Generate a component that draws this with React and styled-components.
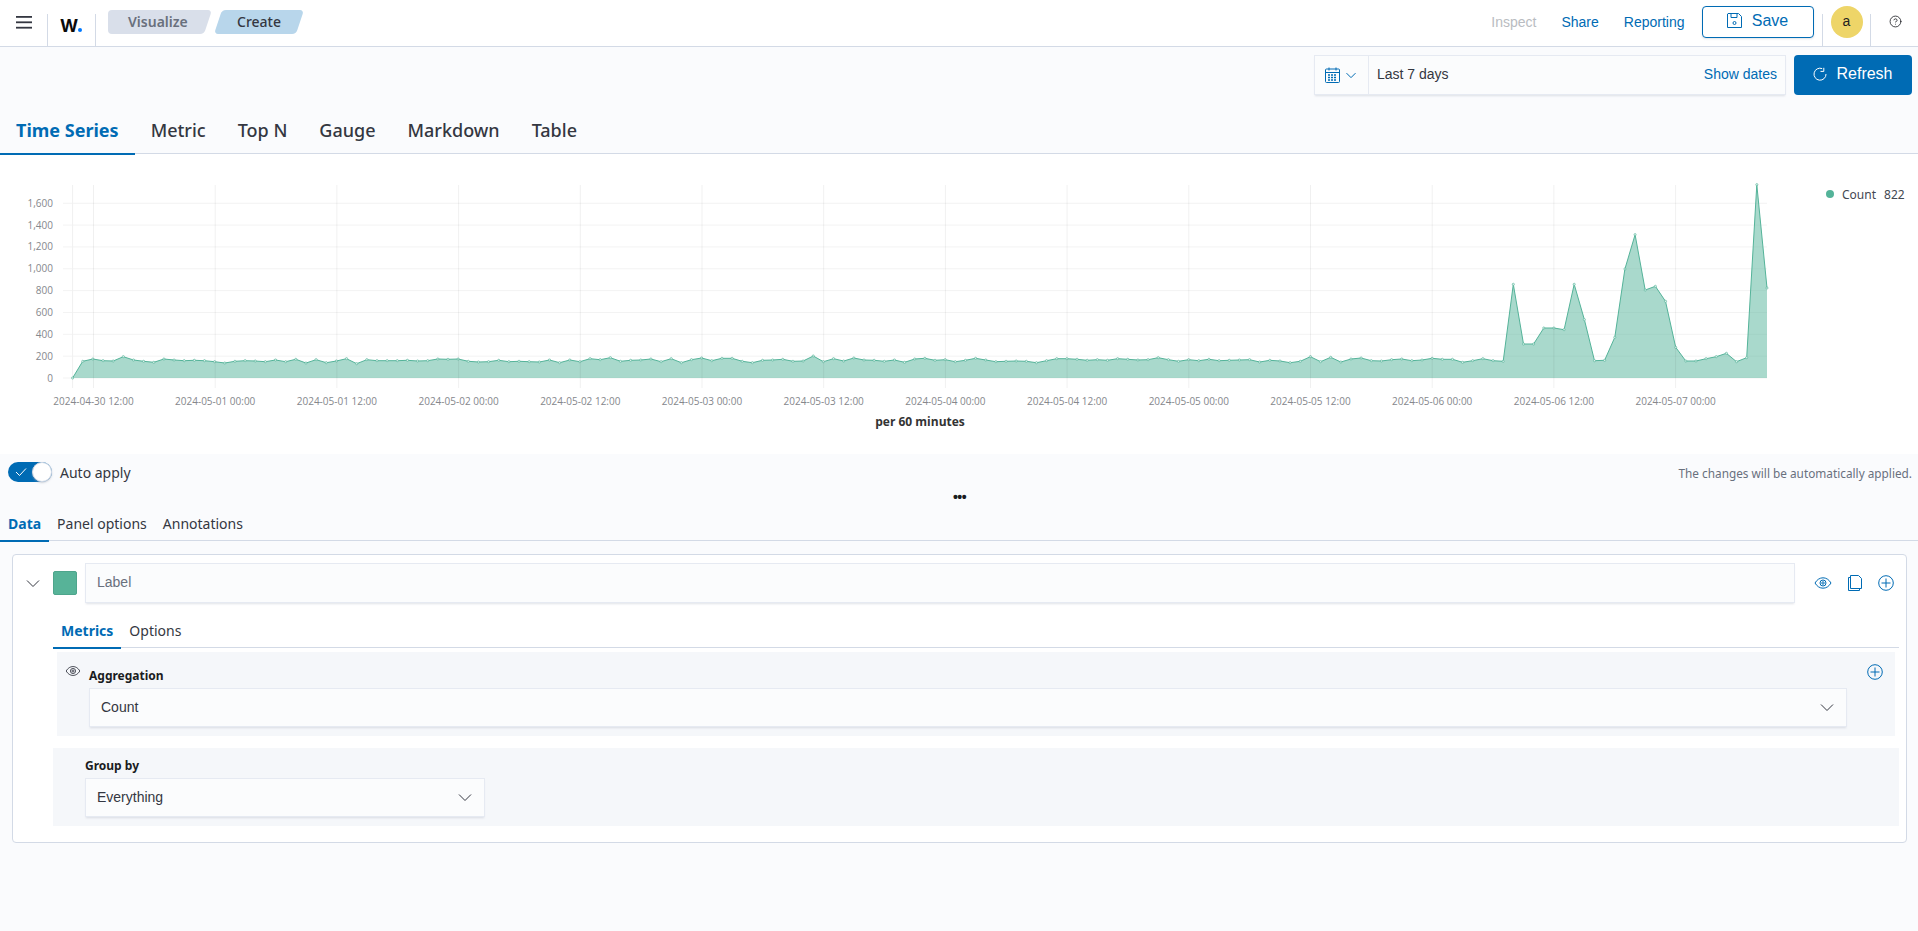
import React from "react";
import styled, { createGlobalStyle } from "styled-components";
import { CircleHelp } from "lucide-react";

const GlobalStyle = createGlobalStyle`
  html, body { margin: 0; padding: 0; background: #fafbfd; }
  body { font-family: "Noto Sans", sans-serif; color: #343741; }
  * { box-sizing: border-box; }
  svg { display: block; }
`;

const arial = `"Liberation Sans", Arial, sans-serif`;
const blue = "#006bb4";

const Page = styled.div`
  width: 1918px;
  min-height: 931px;
  overflow: hidden;
`;

/* top bar */
const Header = styled.header`
  display: flex;
  height: 47px;
  background: #fff;
  border-bottom: 1px solid #d3dae6;
`;
const MenuCell = styled.div`
  width: 48px;
  height: 32px;
  align-self: flex-end;
  border-right: 1px solid #d3dae6;
  padding: 2px 0 0 16px;
`;
const LogoCell = styled.div`
  width: 48px;
  height: 32px;
  align-self: flex-end;
  border-right: 1px solid #d3dae6;
  padding-left: 12px;
  display: flex;
  align-items: baseline;
  font-family: Inter, sans-serif;
  font-size: 17.5px;
  line-height: 24px;
  font-weight: 700;
  color: #0b0b0b;
`;
const LogoDot = styled.span`
  width: 4px;
  height: 4px;
  border-radius: 50%;
  background: #0079ff;
`;
const Crumbs = styled.div`
  display: flex;
  margin: 10px 0 0 12px;
  gap: 10px;
`;
const Crumb = styled.div`
  position: relative;
  height: 24px;
  width: ${(p) => p.$w}px;
  padding-left: ${(p) => p.$pad}px;
  font-size: 14px;
  line-height: 24px;
  font-weight: ${(p) => (p.$current ? 500 : 600)};
  color: ${(p) => (p.$current ? "#343741" : "#69707d")};
  z-index: 0;

  &::before {
    content: "";
    position: absolute;
    top: 0;
    bottom: 0;
    right: 0;
    left: ${(p) => (p.$current ? 0 : "12px")};
    z-index: -1;
    border-radius: 4px;
    background: ${(p) => (p.$current ? "#b8d6eb" : "#d9dfea")};
    transform: skewX(-18.4deg);
  }
  ${(p) =>
    !p.$current &&
    `&::after {
      content: "";
      position: absolute;
      left: 0; top: 0; bottom: 0;
      width: 24px;
      z-index: -1;
      border-radius: 4px 0 0 4px;
      background: #d9dfea;
    }`}
`;
const Nav = styled.nav`
  margin-left: auto;
  display: flex;
  align-items: flex-start;
  font-family: ${arial};
`;
const NavLink = styled.a`
  font-size: 14px;
  line-height: 16px;
  margin: 14px ${(p) => p.$gap ?? 26}px 0 0;
  color: ${(p) => (p.$muted ? "#b9bcc1" : blue)};
`;
const SaveButton = styled.button`
  width: 112px;
  height: 32px;
  margin-top: 6px;
  background: #fff;
  border: 1px solid ${blue};
  border-radius: 4px;
  color: ${blue};
  font: 16px/20px ${arial};
  display: flex;
  align-items: center;
  justify-content: center;
  gap: 10px;
  padding: 0 0 3px;
  box-shadow: 0 1px 2px rgba(152, 162, 179, 0.3);
`;
const AvatarCell = styled.div`
  width: 49px;
  height: 32px;
  align-self: flex-end;
  margin-left: 8.5px;
  border-left: 1px solid #d3dae6;
  border-right: 1px solid #d3dae6;
  display: flex;
  justify-content: center;
`;
const Avatar = styled.div`
  width: 32px;
  height: 32px;
  margin-top: -8px;
  border-radius: 50%;
  background: #eed568;
  color: #222;
  font-size: 14px;
  line-height: 30px;
  text-align: center;
`;
const HelpCell = styled.div`
  width: 47px;
  padding: 15px 0 0 18px;
  color: #1a1c21;
`;

/* time picker row */
const Toolbar = styled.div`
  display: flex;
  justify-content: flex-end;
  gap: 8px;
  height: 59px;
  padding: 8px 6px 0 0;
`;
const DateBar = styled.div`
  width: 472px;
  height: 40px;
  display: flex;
  align-items: center;
  background: #fbfcfd;
  border: 1px solid #e6eaf2;
  box-shadow: 0 2px 2px -1px rgba(152, 162, 179, 0.3);
  font: 14px ${arial};
`;
const DateQuick = styled.div`
  width: 54px;
  height: 100%;
  display: flex;
  align-items: center;
  gap: 5px;
  padding-left: 10px;
  border-right: 1px solid #e6eaf2;
`;
const DateText = styled.span`
  flex: 1;
  padding: 0 0 2px 8px;
  color: #343741;
`;
const ShowDates = styled.a`
  color: ${blue};
  padding: 0 8px 2px 0;
`;
const RefreshButton = styled.button`
  width: 118px;
  height: 40px;
  border: 0;
  border-radius: 4px;
  background: ${blue};
  color: #fff;
  font: 16px ${arial};
  display: flex;
  align-items: center;
  justify-content: center;
  gap: 9px;
  padding: 0 0 2px;
`;

/* tabs */
const TabRow = styled.div`
  display: flex;
  height: ${(p) => p.$h}px;
  margin-top: ${(p) => p.$top ?? 0}px;
  margin-left: ${(p) => p.$inset ?? 0}px;
  margin-right: ${(p) => p.$insetRight ?? 0}px;
  border-bottom: 1px solid #d3dae6;
`;
const Tab = styled.div`
  padding: 0 ${(p) => p.$pad}px;
  height: ${(p) => p.$h + 1}px;
  line-height: ${(p) => p.$h}px;
  font-size: ${(p) => p.$size}px;
  font-weight: ${(p) => (p.$active ? 700 : p.$size > 14 ? 500 : 400)};
  color: ${(p) => (p.$active ? blue : "#343741")};
  border-bottom: 2px solid ${(p) => (p.$active ? blue : "transparent")};
`;

/* chart */
const ChartSection = styled.section`
  display: flex;
  height: 300px;
  background: #fff;
`;
const ChartSvg = styled.svg`
  flex: none;
`;
const AxisText = styled.text`
  font-family: "Open Sans", sans-serif;
  font-size: 10px;
  fill: #85878c;
`;
const AxisTitle = styled.text`
  font-family: "Open Sans", sans-serif;
  font-size: 12px;
  font-weight: 700;
  fill: #333;
`;
const Legend = styled.div`
  display: flex;
  align-items: center;
  height: 16px;
  margin: 32px 0 0 26px;
  font-size: 12px;
  color: #434852;
`;
const LegendDot = styled.span`
  width: 8px;
  height: 8px;
  border-radius: 50%;
  background: #54b399;
  margin-right: 8px;
`;
const LegendValue = styled.span`
  margin-left: 8px;
`;

/* auto apply row */
const ApplyRow = styled.div`
  display: flex;
  align-items: center;
  height: 28px;
  padding: 8px 6px 0 8px;
`;
const Switch = styled.div`
  width: 44px;
  height: 20px;
  border-radius: 10px;
  background: ${blue};
  display: flex;
  align-items: center;
  justify-content: space-between;
  padding-left: 7px;
`;
const SwitchKnob = styled.span`
  width: 20px;
  height: 20px;
  border-radius: 50%;
  background: #fff;
  border: 1px solid #d3dae6;
  box-shadow: 0 1px 2px rgba(152, 162, 179, 0.5);
`;
const ApplyLabel = styled.span`
  margin: 1px 0 0 8px;
  font-size: 14px;
  color: #343741;
`;
const ApplyHint = styled.span`
  margin: 1px 0 0 auto;
  font-size: 11.8px;
  color: #69707d;
`;
const Dots = styled.div`
  height: 20px;
  margin-top: 4px;
  padding-left: 1px;
  text-align: center;
  font: 700 14px/23px ${arial};
  letter-spacing: -0.5px;
  color: #1a1c21;
`;

/* series card */
const Card = styled.div`
  width: 1895px;
  margin: 13px 0 0 12px;
  padding: 8px 0 16px;
  background: #fff;
  border: 1px solid #d3dae6;
  border-radius: 4px;
`;
const SeriesRow = styled.div`
  display: flex;
  align-items: center;
  height: 40px;
`;
const Collapse = styled.div`
  width: 40px;
  display: flex;
  justify-content: center;
  color: #343741;
`;
const Swatch = styled.div`
  width: 24px;
  height: 24px;
  margin-right: 8px;
  border-radius: 2px;
  border: 1px solid #4ea58c;
  background: #57b398;
`;
const Field = styled.div`
  width: ${(p) => p.$w}px;
  height: ${(p) => p.$h ?? 39}px;
  display: flex;
  align-items: center;
  justify-content: space-between;
  padding: 0 11px 2px;
  background: #fbfcfd;
  border: 1px solid #e6eaf2;
  box-shadow: 0 2px 2px -1px rgba(152, 162, 179, 0.3);
  font: 14px ${arial};
  color: ${(p) => (p.$placeholder ? "#69707d" : "#343741")};
`;
const RowActions = styled.div`
  display: flex;
  align-items: center;
  gap: 16px;
  margin-left: 19px;
  color: ${blue};
`;
const MetricPanel = styled.div`
  display: flex;
  height: 84px;
  margin: 4px 11px 0 44px;
  padding-top: 15px;
  background: #f5f7fa;
`;
const EyeCol = styled.div`
  width: 32px;
  margin-top: -2px;
  padding-left: 8px;
  color: #343741;
`;
const FieldCol = styled.div`
  width: 1758px;
`;
const PlusCol = styled.div`
  margin-top: -3px;
  padding-left: 20px;
  color: ${blue};
`;
const FieldLabel = styled.div`
  font-size: 12px;
  line-height: 16px;
  font-weight: 700;
  color: #1a1c21;
  margin-top: ${(p) => p.$top ?? 0}px;
  margin-bottom: ${(p) => p.$gap}px;
`;
const GroupPanel = styled.div`
  height: 78px;
  margin: 12px 7px 0 40px;
  padding: 10px 0 0 32px;
  background: #f5f7fa;
`;

const Chevron = ({ size = 16, color = "#343741" }) => (
  <svg width={size} height={size} viewBox="0 0 16 16" fill="none" stroke={color} strokeWidth={16 / size}>
    <path d="M2 5.5l6 6 6-6" />
  </svg>
);
const Eye = ({ w = 18, h = 14 }) => (
  <svg width={w} height={h} viewBox="0 0 18 14" fill="none" stroke="currentColor" strokeWidth="1">
    <path d="M1 7c2-3.4 4.8-5.2 8-5.2s6 1.8 8 5.2c-2 3.4-4.8 5.2-8 5.2S3 10.4 1 7z" />
    <circle cx="9" cy="7" r="3" />
    <circle cx="9" cy="7" r="1.2" />
  </svg>
);
const PlusCircle = () => (
  <svg width="16" height="16" viewBox="0 0 16 16" fill="none" stroke="currentColor" strokeWidth="1">
    <circle cx="8" cy="8" r="7.3" />
    <path d="M8 3.5v9M3.5 8h9" />
  </svg>
);

// heights of the series, in thirds of a pixel above the zero line
const heights = [
  0, 50, 57, 52, 51, 64, 54, 50, 47, 57,
  54, 52, 53, 52, 49, 45, 50, 52, 51, 49,
  54, 49, 56, 45, 55, 46, 51, 58, 43, 55,
  52, 52, 52, 53, 51, 52, 57, 56, 57, 50,
  48, 49, 53, 49, 50, 49, 48, 54, 46, 54,
  49, 58, 55, 61, 50, 53, 54, 57, 49, 58,
  46, 55, 60, 52, 59, 59, 50, 46, 53, 54,
  56, 50, 51, 66, 49, 58, 51, 60, 54, 53,
  50, 54, 47, 57, 59, 53, 55, 49, 53, 59,
  54, 49, 50, 51, 50, 46, 52, 58, 58, 56,
  53, 55, 53, 58, 56, 54, 55, 61, 55, 50,
  55, 52, 56, 52, 53, 54, 55, 48, 53, 51,
  46, 50, 64, 49, 62, 48, 57, 60, 52, 51,
  55, 57, 52, 54, 59, 56, 56, 47, 52, 58,
  52, 50, 281, 102, 102, 150, 150, 145, 281, 175,
  52, 53, 122, 327, 430, 264, 275, 230, 92, 51,
  51, 58, 64, 74, 49, 61, 580, 270,
];

const xTicks = [
  "2024-04-30 12:00", "2024-05-01 00:00", "2024-05-01 12:00", "2024-05-02 00:00",
  "2024-05-02 12:00", "2024-05-03 00:00", "2024-05-03 12:00", "2024-05-04 00:00",
  "2024-05-04 12:00", "2024-05-05 00:00", "2024-05-05 12:00", "2024-05-06 00:00",
  "2024-05-06 12:00", "2024-05-07 00:00",
];
const yTicks = ["0", "200", "400", "600", "800", "1,000", "1,200", "1,400", "1,600"];

const Chart = () => {
  const baseY = 379;
  const px = (i) => 72.6 + i * 10.146;
  const py = (h) => baseY - h / 3;
  const line = heights.map((h, i) => `${px(i).toFixed(1)},${py(h).toFixed(1)}`).join(" ");
  const area = `${px(0)},${baseY} ${line} ${px(167).toFixed(1)},${baseY}`;

  return (
    <ChartSvg width="1800" height="300" viewBox="0 155 1800 300">
      {yTicks.map((t, i) => {
        const y = baseY - i * 21.84;
        return (
          <g key={t}>
            <line x1="63" x2="1767" y1={y} y2={y} stroke="#f3f3f3" />
            <AxisText x="53" y={y + 3.5} textAnchor="end">{t}</AxisText>
          </g>
        );
      })}
      <line x1="72.6" x2="72.6" y1="186" y2="389" stroke="#f0f0f0" />
      <polygon points={area} fill="#54b399" fillOpacity="0.5" />
      <polyline points={line} fill="none" stroke="#54b399" strokeWidth="1" />
      {heights.map((h, i) => (
        <circle key={i} cx={px(i)} cy={py(h)} r="1.1" fill="#dff1ec" stroke="#54b399" strokeWidth="0.6" />
      ))}
      {xTicks.map((t, i) => {
        const x = 93.5 + i * 121.7;
        return (
          <g key={t}>
            <line x1={x} x2={x} y1="186" y2="389" stroke="#000" strokeOpacity="0.06" />
            <AxisText x={x} y="406" textAnchor="middle">{t}</AxisText>
          </g>
        );
      })}
      <AxisTitle x="920" y="426.5" textAnchor="middle">per 60 minutes</AxisTitle>
    </ChartSvg>
  );
};

const App = () => (
  <Page>
    <GlobalStyle />
    <Header>
      <MenuCell>
        <svg width="16" height="14" viewBox="0 0 16 14" fill="#343741">
          <rect y="0" width="16" height="1.8" />
          <rect y="5.4" width="16" height="1.8" />
          <rect y="10.8" width="16" height="1.8" />
        </svg>
      </MenuCell>
      <LogoCell>
        W<LogoDot />
      </LogoCell>
      <Crumbs>
        <Crumb $w={100} $pad={20}>Visualize</Crumb>
        <Crumb $w={82} $pad={19} $current>Create</Crumb>
      </Crumbs>
      <Nav>
        <NavLink $muted $gap={25}>Inspect</NavLink>
        <NavLink $gap={25}>Share</NavLink>
        <NavLink $gap={17}>Reporting</NavLink>
        <SaveButton>
          <svg width="15" height="15" viewBox="0 0 15 15" fill="none" stroke="currentColor" strokeWidth="1">
            <path d="M1 .5h10.5l3 3v11H.5V1z" />
            <path d="M4 .5v4h6v-4" />
            <circle cx="7.5" cy="10" r="1.5" />
          </svg>
          Save
        </SaveButton>
        <AvatarCell>
          <Avatar>a</Avatar>
        </AvatarCell>
        <HelpCell>
          <CircleHelp size={13} strokeWidth={1.5} />
        </HelpCell>
      </Nav>
    </Header>

    <Toolbar>
      <DateBar>
        <DateQuick>
          <svg width="15" height="16" viewBox="0 0 15 16" fill="none" stroke={blue} strokeWidth="1">
            <rect x=".5" y="2" width="14" height="13.5" rx="1" />
            <path d="M.5 5.5h14M4 .5v3M11 .5v3" />
            <path d="M3 8h9M3 10.5h9M3 13h9" strokeWidth="1.4" strokeDasharray="2 1" />
          </svg>
          <Chevron size={12} color={blue} />
        </DateQuick>
        <DateText>Last 7 days</DateText>
        <ShowDates>Show dates</ShowDates>
      </DateBar>
      <RefreshButton>
        <svg width="14" height="14" viewBox="0 0 14 14" fill="none" stroke="#fff" strokeWidth="1">
          <path d="M9.2 1.6A6 6 0 1 0 13 7" />
          <path d="M10.8 .8v3.6H7.5" />
        </svg>
        Refresh
      </RefreshButton>
    </Toolbar>

    <TabRow $h={48}>
      <Tab $pad={16} $h={48} $size={18} $active>Time Series</Tab>
      <Tab $pad={16} $h={48} $size={18}>Metric</Tab>
      <Tab $pad={16} $h={48} $size={18}>Top N</Tab>
      <Tab $pad={16} $h={48} $size={18}>Gauge</Tab>
      <Tab $pad={16} $h={48} $size={18}>Markdown</Tab>
      <Tab $pad={16} $h={48} $size={18}>Table</Tab>
    </TabRow>

    <ChartSection>
      <Chart />
      <Legend>
        <LegendDot />
        Count
        <LegendValue>822</LegendValue>
      </Legend>
    </ChartSection>

    <ApplyRow>
      <Switch>
        <svg width="12" height="10" viewBox="0 0 12 10" fill="none" stroke="#fff" strokeWidth="1">
          <path d="M1 5l3.5 3.5L11 1.5" />
        </svg>
        <SwitchKnob />
      </Switch>
      <ApplyLabel>Auto apply</ApplyLabel>
      <ApplyHint>The changes will be automatically applied.</ApplyHint>
    </ApplyRow>
    <Dots>•••</Dots>

    <TabRow $h={35}>
      <Tab $pad={8} $h={35} $size={14} $active>Data</Tab>
      <Tab $pad={8} $h={35} $size={14}>Panel options</Tab>
      <Tab $pad={8} $h={35} $size={14}>Annotations</Tab>
    </TabRow>

    <Card>
      <SeriesRow>
        <Collapse>
          <Chevron />
        </Collapse>
        <Swatch />
        <Field $w={1710} $h={40} $placeholder>Label</Field>
        <RowActions>
          <Eye />
          <svg width="14" height="16" viewBox="0 0 14 16" fill="none" stroke="currentColor" strokeWidth="1">
            <path d="M2.5 2.5H.5v13h11v-2" />
            <path d="M2.5.5h8l3 3v10h-11z" />
          </svg>
          <PlusCircle />
        </RowActions>
      </SeriesRow>

      <TabRow $h={34} $top={11} $inset={40} $insetRight={7}>
        <Tab $pad={8} $h={34} $size={14} $active>Metrics</Tab>
        <Tab $pad={8} $h={34} $size={14}>Options</Tab>
      </TabRow>

      <MetricPanel>
        <EyeCol>
          <Eye w={16} h={12} />
        </EyeCol>
        <FieldCol>
          <FieldLabel $top={1} $gap={4}>Aggregation</FieldLabel>
          <Field $w={1758}>
            Count
            <Chevron />
          </Field>
        </FieldCol>
        <PlusCol>
          <PlusCircle />
        </PlusCol>
      </MetricPanel>

      <GroupPanel>
        <FieldLabel $gap={4}>Group by</FieldLabel>
        <Field $w={400}>
          Everything
          <Chevron />
        </Field>
      </GroupPanel>
    </Card>
  </Page>
);

export default App;
